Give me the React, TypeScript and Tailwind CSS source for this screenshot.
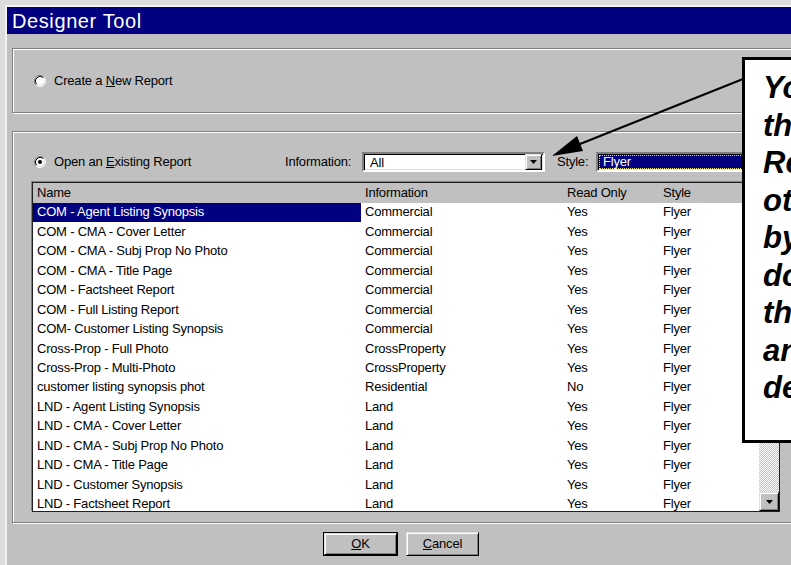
import type { ReactNode } from "react";

type Row = { name: string; info: string; readOnly: string; style: string };

const rows: Row[] = [
  { name: "COM - Agent Listing Synopsis", info: "Commercial", readOnly: "Yes", style: "Flyer" },
  { name: "COM - CMA - Cover Letter", info: "Commercial", readOnly: "Yes", style: "Flyer" },
  { name: "COM - CMA - Subj Prop No Photo", info: "Commercial", readOnly: "Yes", style: "Flyer" },
  { name: "COM - CMA - Title Page", info: "Commercial", readOnly: "Yes", style: "Flyer" },
  { name: "COM - Factsheet Report", info: "Commercial", readOnly: "Yes", style: "Flyer" },
  { name: "COM - Full Listing Report", info: "Commercial", readOnly: "Yes", style: "Flyer" },
  { name: "COM- Customer Listing Synopsis", info: "Commercial", readOnly: "Yes", style: "Flyer" },
  { name: "Cross-Prop - Full Photo", info: "CrossProperty", readOnly: "Yes", style: "Flyer" },
  { name: "Cross-Prop - Multi-Photo", info: "CrossProperty", readOnly: "Yes", style: "Flyer" },
  { name: "customer listing synopsis phot", info: "Residential", readOnly: "No", style: "Flyer" },
  { name: "LND - Agent Listing Synopsis", info: "Land", readOnly: "Yes", style: "Flyer" },
  { name: "LND - CMA - Cover Letter", info: "Land", readOnly: "Yes", style: "Flyer" },
  { name: "LND - CMA - Subj Prop No Photo", info: "Land", readOnly: "Yes", style: "Flyer" },
  { name: "LND - CMA - Title Page", info: "Land", readOnly: "Yes", style: "Flyer" },
  { name: "LND - Customer Synopsis", info: "Land", readOnly: "Yes", style: "Flyer" },
  { name: "LND - Factsheet Report", info: "Land", readOnly: "Yes", style: "Flyer" },
];

const calloutLines = [
  "You can filter",
  "the list of",
  "Reports by",
  "other criteria",
  "by using the",
  "down arrows",
  "that appear",
  "and select the",
  "desired value",
];

function Radio({ checked = false }: { checked?: boolean }) {
  return (
    <svg width="12" height="12" viewBox="0 0 12 12" className="shrink-0">
      <circle cx="6" cy="6" r="5" fill="#fff" />
      <path d="M2.11 9.89A5.5 5.5 0 0 1 9.89 2.11" fill="none" stroke="#808080" />
      <path d="M2.82 9.18A4.5 4.5 0 0 1 9.18 2.82" fill="none" stroke="#000" />
      <path d="M9.89 2.11A5.5 5.5 0 0 1 2.11 9.89" fill="none" stroke="#fff" />
      <path d="M9.18 2.82A4.5 4.5 0 0 1 2.82 9.18" fill="none" stroke="#dfdfdf" />
      {checked && <circle cx="6" cy="6" r="2" fill="#000" />}
    </svg>
  );
}

function DownArrow() {
  return (
    <svg width="7" height="4" viewBox="0 0 7 4">
      <path d="M0 0h7L3.5 4z" fill="#000" />
    </svg>
  );
}

function UpArrow() {
  return (
    <svg width="7" height="4" viewBox="0 0 7 4">
      <path d="M0 4h7L3.5 0z" fill="#000" />
    </svg>
  );
}

// raised win95 bevel used by buttons and scroll arrows
const raised =
  "border border-t-[#dfdfdf] border-l-[#dfdfdf] border-b-black border-r-black bg-[#c0c0c0] shadow-[inset_1px_1px_0_#fff,inset_-1px_-1px_0_#808080]";

const sunken =
  "border-2 border-t-[#808080] border-l-[#808080] border-b-white border-r-white shadow-[inset_1px_1px_0_#000,inset_-1px_-1px_0_#dfdfdf]";

const etched = "border border-[#808080] shadow-[inset_1px_1px_0_#fff,1px_1px_0_#fff]";

function Button({ children, isDefault = false }: { children: ReactNode; isDefault?: boolean }) {
  return (
    <div className={`h-[24px] ${isDefault ? "w-[75px] border border-black" : "w-[73px]"}`}>
      <div className={`${raised} flex h-full w-full items-center justify-center`}>{children}</div>
    </div>
  );
}

function Scrollbar() {
  return (
    <div className="flex w-[20px] shrink-0 flex-col">
      <div className={`${raised} flex h-[19px] items-center justify-center`}>
        <UpArrow />
      </div>
      <div className={`${raised} h-[60px]`} />
      <div className="flex-1 bg-[repeating-conic-gradient(#fff_0_25%,#c0c0c0_0_50%)] bg-[length:2px_2px]" />
      <div className={`${raised} flex h-[19px] items-center justify-center`}>
        <DownArrow />
      </div>
    </div>
  );
}

export default function App() {
  return (
    <div className="relative h-[565px] w-[791px] overflow-hidden bg-[#dcdcdc] font-['Liberation_Sans',Arial,sans-serif] text-[13px] tracking-[-0.2px] text-black">
      <div className="ml-[5px] mt-[5px] h-[600px] w-[820px] border-l-2 border-t-2 border-[#f2f2f2] bg-[#c0c0c0]">
        {/* title bar */}
        <div className="flex h-[27px] items-center bg-[#000080] pl-[5px] text-[20px] leading-none tracking-[0.6px] text-white">
          Designer Tool
        </div>

        <div className="pl-[5px] pt-[14px]">
          {/* new report group */}
          <div className={`${etched} flex h-[65px] w-[800px] items-center pl-[21px]`}>
            <Radio />
            <span className="ml-[8px]">
              Create a <span className="underline">N</span>ew Report
            </span>
          </div>

          {/* existing report group */}
          <div className={`${etched} mt-[18px] h-[392px] w-[800px] pl-[19px] pt-[20px]`}>
            <div className="flex h-[20px] items-center">
              <div className="flex w-[253px] items-center pl-[2px]">
                <Radio checked />
                <span className="ml-[8px]">
                  Open an <span className="underline">E</span>xisting Report
                </span>
              </div>
              <span className="w-[77px]">Information:</span>
              <div className={`${sunken} flex h-[20px] w-[183px] items-center bg-white`}>
                <span className="flex-1 pl-[6px] pt-[2px]">All</span>
                <div className={`${raised} mr-[1px] flex h-[16px] w-[17px] items-center justify-center`}>
                  <DownArrow />
                </div>
              </div>
              <span className="ml-[12px] w-[39px]">Style:</span>
              <div className={`${sunken} flex h-[20px] w-[200px] items-center bg-white p-[1px]`}>
                <div className="flex h-full flex-1 items-center border border-dotted border-[#e8e070] bg-[#000080] pl-[3px] text-white">
                  Flyer
                </div>
              </div>
            </div>

            {/* report list */}
            <div className="mt-[10px] flex h-[330px] w-[748px] border border-[#202020] shadow-[-1px_-1px_0_#808080]">
              <div className="flex min-w-0 flex-1 flex-col overflow-hidden bg-white">
                <div className="flex h-[19.5px] shrink-0 items-center bg-[#c0c0c0]">
                  <span className="w-[328px] pl-[4px]">Name</span>
                  <span className="w-[202px] pl-[4px]">Information</span>
                  <span className="w-[96px] pl-[4px]">Read Only</span>
                  <span className="pl-[4px]">Style</span>
                </div>
                {rows.map((r, i) => (
                  <div key={r.name} className="flex h-[19.45px] shrink-0 items-center">
                    <span
                      className={`flex h-full w-[328px] items-center pl-[4px] ${
                        i === 0 ? "bg-[#000080] text-white" : ""
                      }`}
                    >
                      {r.name}
                    </span>
                    <span className="w-[202px] pl-[4px]">{r.info}</span>
                    <span className="w-[96px] pl-[4px]">{r.readOnly}</span>
                    <span className="pl-[4px]">{r.style}</span>
                  </div>
                ))}
              </div>
              <Scrollbar />
            </div>
          </div>

          <div className="ml-[311px] mt-[9px] flex gap-[8px]">
            <Button isDefault>
              <span>
                <span className="underline">O</span>K
              </span>
            </Button>
            <Button>
              <span>
                <span className="underline">C</span>ancel
              </span>
            </Button>
          </div>
        </div>
      </div>

      {/* callout with pointer arrow */}
      <svg className="pointer-events-none absolute left-0 top-0" width="791" height="565" viewBox="0 0 791 565">
        <line x1="743" y1="79" x2="575" y2="146" stroke="#000" strokeWidth="2" />
        <polygon points="552,156 583,151 577,136" fill="#000" />
      </svg>
      <div className="absolute left-[742px] top-[57px] h-[386px] w-[80px] border-[3px] border-black bg-white pl-[18px] pt-[9px] text-[31px] font-bold italic leading-[37.5px] tracking-normal">
        {calloutLines.map((l) => (
          <div key={l} className="whitespace-nowrap">
            {l}
          </div>
        ))}
      </div>
    </div>
  );
}
